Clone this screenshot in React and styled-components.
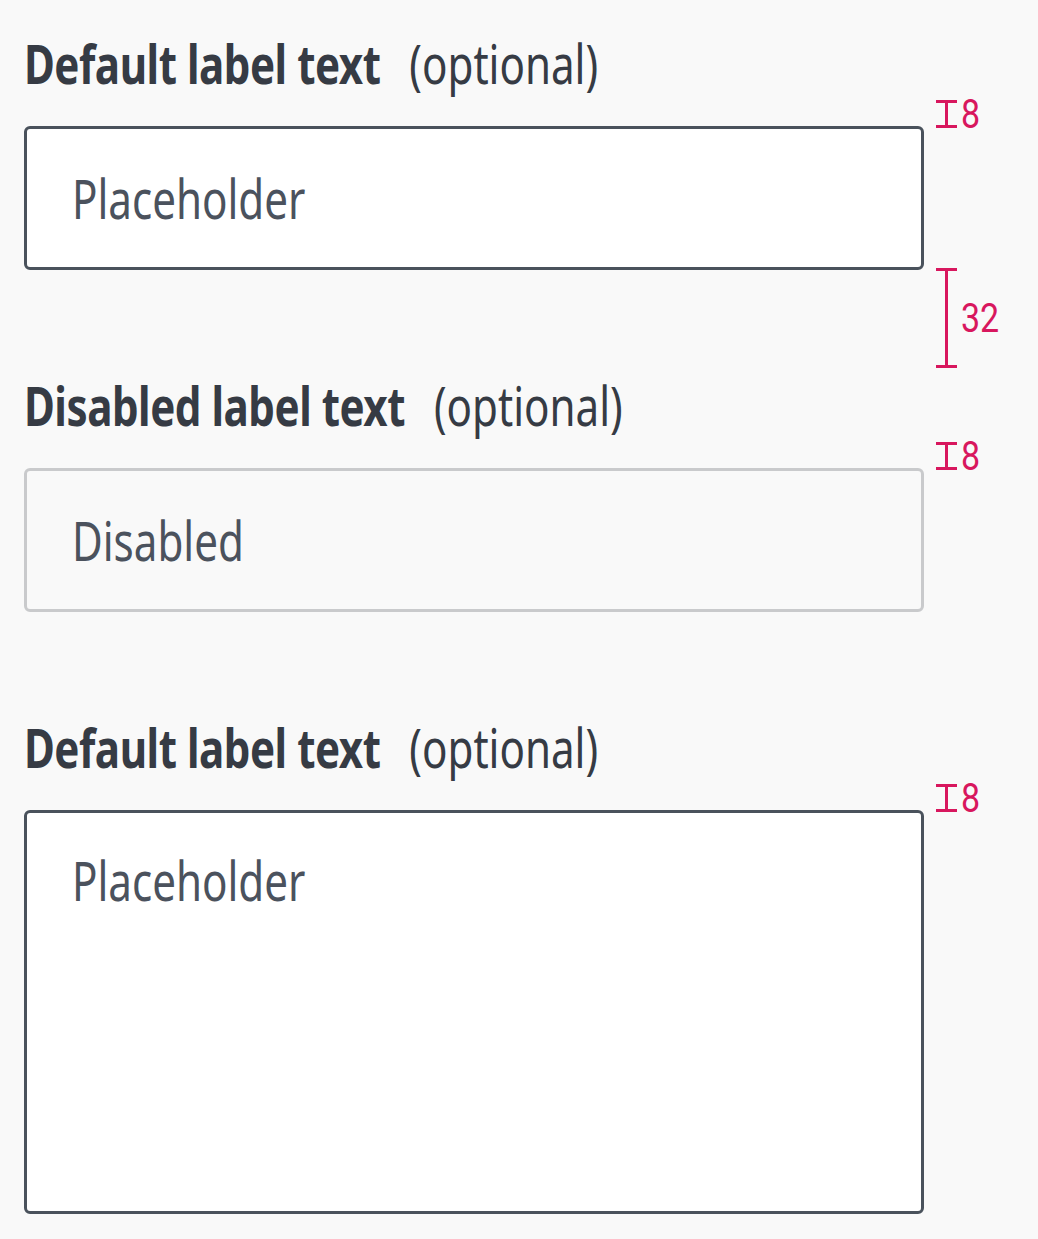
import styled, { createGlobalStyle } from 'styled-components';

// the reference face is a condensed sans; squeeze a regular one to its width
const NARROW = 0.78;

const GlobalStyle = createGlobalStyle`
    html, body {
        margin: 0;
        padding: 0;
        background: #F9F9F9;
    }
    * {
        box-sizing: border-box;
    }
`

const Page = styled.div`
    min-height: 100vh;
    padding: 24px;
    background: #F9F9F9;
    font-family: "Noto Sans", "Open Sans", sans-serif;
`
const FormGrid = styled.div`
    display: grid;
    grid-template-columns: 900px auto;
    column-gap: 12px;
`
const Label = styled.label`
    height: 78px;
    display: flex;
    align-items: center;
    gap: 37px;
    font-size: 54px;
    color: #363B44;
    white-space: nowrap;
    transform: scaleX(${NARROW});
    transform-origin: left center;
`
const LabelMain = styled.span`
    font-weight: 700;
    letter-spacing: -0.6px;
`
const LabelHint = styled.span`
    font-weight: 400;
`
const Gap = styled.div`
    height: ${props => props.size}px;
    display: flex;
    align-items: center;
`
const Measure = styled.div`
    display: flex;
    align-items: center;
    gap: 4px;
    height: ${props => props.size + 4}px;
    color: #D8175E;
    font-size: 40px;
    font-family: "Roboto", "Noto Sans", sans-serif;
`
const MeasureValue = styled.span`
    display: inline-block;
    transform: scaleX(0.85);
    transform-origin: left center;
`
const Beam = styled.span`
    position: relative;
    width: 21px;
    height: 100%;
    border-top: 3px solid #D8175E;
    border-bottom: 3px solid #D8175E;
    &::before {
        content: '';
        position: absolute;
        left: 9px;
        top: 0;
        bottom: 0;
        width: 3px;
        background: #D8175E;
    }
`
const FieldBox = styled.div`
    display: flex;
    height: ${props => props.height}px;
    padding-left: 45px;
    border: 3px solid ${props => props.disabled ? '#C9CACC' : '#4A525C'};
    border-radius: 6px;
    background: ${props => props.disabled ? '#F9F9F9' : '#FFFFFF'};
    overflow: hidden;
`
const textStyle = `
    flex-shrink: 0;
    width: calc(100% / ${NARROW});
    height: 100%;
    margin: 0;
    border: 0;
    background: transparent;
    font-family: inherit;
    font-size: 54px;
    color: #4B525D;
    outline: none;
    transform: scaleX(${NARROW});
    transform-origin: left center;
    &::placeholder {
        color: #4B525D;
        opacity: 1;
    }
`
const Field = styled.input`
    ${textStyle}
    padding: 0;
    &:disabled {
        -webkit-text-fill-color: #4B525D;
        opacity: 1;
    }
`
const Area = styled.textarea`
    ${textStyle}
    display: block;
    padding: 30px 0 0;
    line-height: 1.4;
    resize: none;
`

const Spacing = ({ size, value }) => (
    <Measure size={size}>
        <Beam />
        <MeasureValue>{value}</MeasureValue>
    </Measure>
)

const FieldLabel = ({ children }) => (
    <Label>
        <LabelMain>{children}</LabelMain>
        <LabelHint>(optional)</LabelHint>
    </Label>
)

const App = () => {
    return (
        <>
            <GlobalStyle />
            <Page>
                <FormGrid>
                    <FieldLabel>Default label text</FieldLabel>
                    <div />

                    <Gap size={24} />
                    <Gap size={24}><Spacing size={24} value='8' /></Gap>

                    <FieldBox height={144}>
                        <Field placeholder='Placeholder' />
                    </FieldBox>
                    <div />

                    <Gap size={96} />
                    <Gap size={96}><Spacing size={96} value='32' /></Gap>

                    <FieldLabel>Disabled label text</FieldLabel>
                    <div />

                    <Gap size={24} />
                    <Gap size={24}><Spacing size={24} value='8' /></Gap>

                    <FieldBox height={144} disabled>
                        <Field disabled defaultValue='Disabled' />
                    </FieldBox>
                    <div />

                    <Gap size={96} />
                    <div />

                    <FieldLabel>Default label text</FieldLabel>
                    <div />

                    <Gap size={24} />
                    <Gap size={24}><Spacing size={24} value='8' /></Gap>

                    <FieldBox height={404}>
                        <Area placeholder='Placeholder' />
                    </FieldBox>
                    <div />
                </FormGrid>
            </Page>
        </>
    )
}

export default App;
